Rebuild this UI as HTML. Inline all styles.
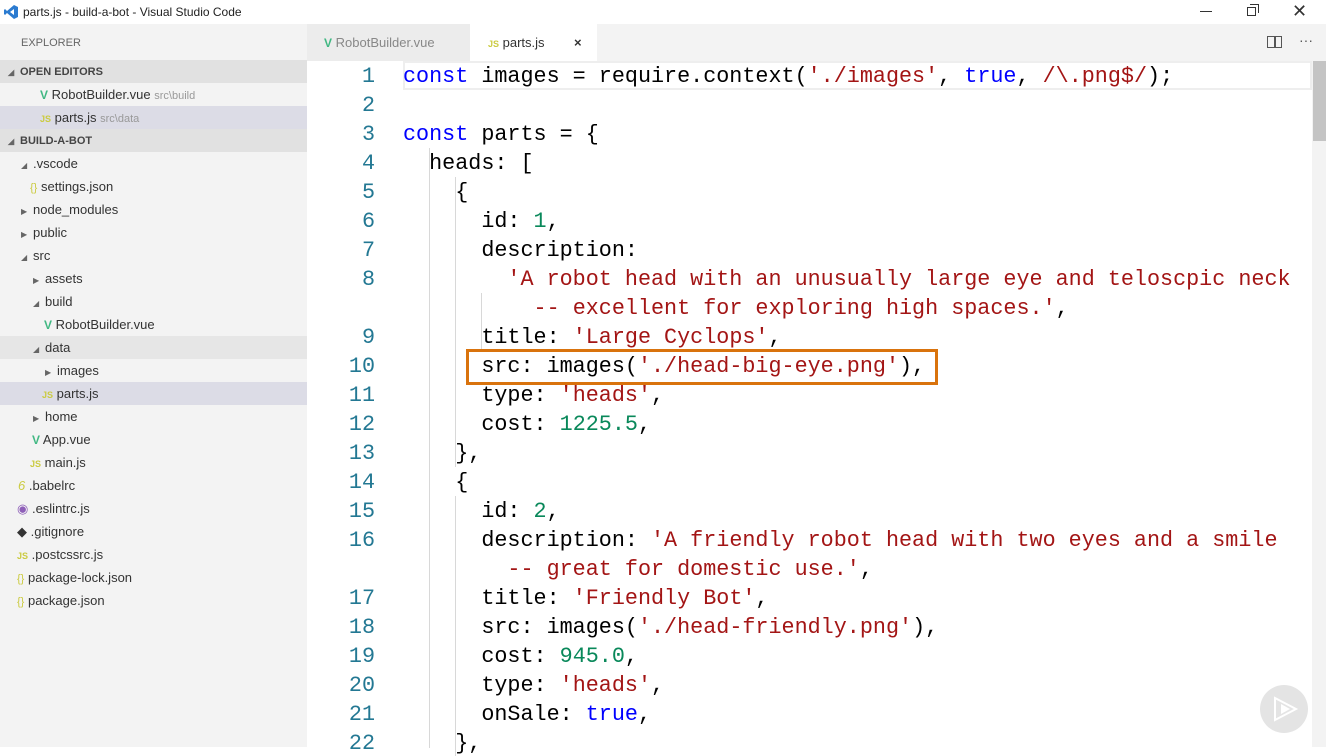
<!DOCTYPE html>
<html><head><meta charset="utf-8"><style>
*{margin:0;padding:0;box-sizing:border-box}
body{width:1326px;height:747px;overflow:hidden;background:#fff;font-family:"Liberation Sans",sans-serif;position:relative}
.title{position:absolute;left:0;top:0;width:1326px;height:24px;background:#fff;font-size:12px;color:#222}
.side{position:absolute;left:0;top:24px;width:307px;height:723px;background:#f3f3f3;font-size:13px;color:#333}
.row{position:absolute;left:0;width:307px;height:23px;line-height:24px;white-space:nowrap}
.hdr{background:#e1e1e1;font-weight:bold;font-size:11px;color:#444}
.sel{background:#dcdce6}
.dim{color:#999;font-size:11px}
.tw{font-size:8px;color:#666;display:inline-block;width:12px}
.v{color:#41b883;font-weight:bold;font-size:12px}
.js{color:#cbcb41;font-size:9px;font-weight:bold}
.br{color:#cbcb41;font-size:11px}
.tabs{position:absolute;left:307px;top:24px;width:1019px;height:37px;background:#f3f3f3;font-size:13px}
.tab{position:absolute;top:0;height:37px;line-height:37px}
.ed{position:absolute;left:307px;top:61px;width:1005px;height:686px;font-family:"Liberation Mono",monospace;font-size:21.75px}
.ln{position:absolute;width:68px;text-align:right;color:#237893}
.cd{position:absolute;left:96px;white-space:pre;color:#000}
.k{color:#0000ff}.s{color:#a31515}.n{color:#09885a}
.g{position:absolute;width:1px;background:#d8d8d8}
</style></head><body>
<div class="title">
<svg style="position:absolute;left:3px;top:4px" width="16" height="16" viewBox="0 0 16 16"><path d="M11 1 L15 3 V13 L11 15 L4 9 L2 11 L1 10 V6 L2 5 L4 7 Z M11 5 L7 8 L11 11Z" fill="#2b7bd0"/></svg>
<span style="position:absolute;left:23px;top:5px">parts.js - build-a-bot - Visual Studio Code</span>
<div style="position:absolute;left:1200px;top:11px;width:12px;height:1px;background:#333"></div>
<div style="position:absolute;left:1247px;top:7px;width:9px;height:9px;border:1px solid #333"></div>
<div style="position:absolute;left:1250px;top:4px;width:9px;height:9px;border-top:1px solid #333;border-right:1px solid #333"></div>
<span style="position:absolute;left:1292px;top:1px;font-size:18px;color:#333">✕</span>
</div>
<div class="side">
<div class="row" style="top:7px;left:21px;font-size:11px;color:#666">EXPLORER</div>
<div class="row hdr" style="top:36px"><span class="tw" style="margin-left:8px">◢</span>OPEN EDITORS</div>
<div class="row" style="top:59px;padding-left:40px"><span class="v">V</span> RobotBuilder.vue <span class="dim">src\build</span></div>
<div class="row sel" style="top:82px;padding-left:40px"><span class="js">JS</span> parts.js <span class="dim">src\data</span></div>
<div class="row hdr" style="top:105px"><span class="tw" style="margin-left:8px">◢</span>BUILD-A-BOT</div>
<div class="row" style="top:128px;padding-left:21px"><span class="tw">◢</span>.vscode</div>
<div class="row" style="top:151px;padding-left:30px"><span class="br">{}</span> settings.json</div>
<div class="row" style="top:174px;padding-left:21px"><span class="tw">▶</span>node_modules</div>
<div class="row" style="top:197px;padding-left:21px"><span class="tw">▶</span>public</div>
<div class="row" style="top:220px;padding-left:21px"><span class="tw">◢</span>src</div>
<div class="row" style="top:243px;padding-left:33px"><span class="tw">▶</span>assets</div>
<div class="row" style="top:266px;padding-left:33px"><span class="tw">◢</span>build</div>
<div class="row" style="top:289px;padding-left:44px"><span class="v">V</span> RobotBuilder.vue</div>
<div class="row" style="top:312px;padding-left:33px;background:#e6e6e6"><span class="tw">◢</span>data</div>
<div class="row" style="top:335px;padding-left:45px"><span class="tw">▶</span>images</div>
<div class="row sel" style="top:358px;padding-left:42px"><span class="js">JS</span> parts.js</div>
<div class="row" style="top:381px;padding-left:33px"><span class="tw">▶</span>home</div>
<div class="row" style="top:404px;padding-left:32px"><span class="v">V</span> App.vue</div>
<div class="row" style="top:427px;padding-left:30px"><span class="js">JS</span> main.js</div>
<div class="row" style="top:450px;padding-left:18px"><span style="color:#cbcb41;font-style:italic">6</span> .babelrc</div>
<div class="row" style="top:473px;padding-left:17px"><span style="color:#8e5fb8">◉</span> .eslintrc.js</div>
<div class="row" style="top:496px;padding-left:17px"><span style="color:#333">◆</span> .gitignore</div>
<div class="row" style="top:519px;padding-left:17px"><span class="js">JS</span> .postcssrc.js</div>
<div class="row" style="top:542px;padding-left:17px"><span class="br">{}</span> package-lock.json</div>
<div class="row" style="top:565px;padding-left:17px"><span class="br">{}</span> package.json</div>
</div>
<div class="tabs">
<div class="tab" style="left:0;width:163px;background:#ececec;color:#888;padding-left:17px"><span class="v">V</span> RobotBuilder.vue</div>
<div class="tab" style="left:163px;width:127px;background:#fff;color:#333;padding-left:18px"><span class="js">JS</span> parts.js <span style="position:absolute;left:104px;font-weight:bold">×</span></div>
<div style="position:absolute;left:960px;top:12px;width:15px;height:12px;border:1.5px solid #555"></div>
<div style="position:absolute;left:967px;top:12px;width:1.5px;height:12px;background:#555"></div>
<span style="position:absolute;left:992px;top:8px;color:#555;font-size:14px">···</span>
</div>
<div style="position:absolute;left:1312px;top:61px;width:14px;height:686px;background:#f3f3f3"></div>
<div style="position:absolute;left:1313px;top:61px;width:13px;height:80px;background:#c4c4c4"></div>
<div class="ed">
<div style="position:absolute;left:96px;top:0;width:909px;height:29px;border:2px solid #eee"></div>
<div class="g" style="left:122px;top:87px;height:600px"></div>
<div class="g" style="left:148px;top:116px;height:290px"></div>
<div class="g" style="left:148px;top:435px;height:260px"></div>
<div class="g" style="left:174px;top:232px;height:58px"></div>
<div style="position:absolute;left:159px;top:288px;width:472px;height:36px;border:3px solid #d9730d"></div>
<div id="code"></div>
</div>
<div style="position:absolute;left:1260px;top:685px;width:48px;height:48px;border-radius:50%;background:#e4e4e4"></div>
<svg style="position:absolute;left:1272px;top:696px" width="28" height="26"><path d="M3 2 L24 13 L3 24 Z" fill="none" stroke="#fff" stroke-width="2"/><path d="M9 8 L18 13 L9 18Z" fill="#fff"/></svg>
<script>
var L=[
['1','<span class="k">const</span> images = require.context(<span class="s">\'./images\'</span>, <span class="k">true</span>, <span class="s">/\\.png$/</span>);'],
['2',''],
['3','<span class="k">const</span> parts = {'],
['4','  heads: ['],
['5','    {'],
['6','      id: <span class="n">1</span>,'],
['7','      description:'],
['8','        <span class="s">\'A robot head with an unusually large eye and teloscpic neck</span>'],
['','          <span class="s">-- excellent for exploring high spaces.\'</span>,'],
['9','      title: <span class="s">\'Large Cyclops\'</span>,'],
['10','      src: images(<span class="s">\'./head-big-eye.png\'</span>),'],
['11','      type: <span class="s">\'heads\'</span>,'],
['12','      cost: <span class="n">1225.5</span>,'],
['13','    },'],
['14','    {'],
['15','      id: <span class="n">2</span>,'],
['16','      description: <span class="s">\'A friendly robot head with two eyes and a smile</span>'],
['','        <span class="s">-- great for domestic use.\'</span>,'],
['17','      title: <span class="s">\'Friendly Bot\'</span>,'],
['18','      src: images(<span class="s">\'./head-friendly.png\'</span>),'],
['19','      cost: <span class="n">945.0</span>,'],
['20','      type: <span class="s">\'heads\'</span>,'],
['21','      onSale: <span class="k">true</span>,'],
['22','    },']];
var h='';L.forEach(function(r,i){var t=i*29+3;h+='<div class="ln" style="top:'+t+'px">'+r[0]+'</div><div class="cd" style="top:'+t+'px">'+r[1]+'</div>';});
document.getElementById('code').innerHTML=h;
</script>
</body></html>
